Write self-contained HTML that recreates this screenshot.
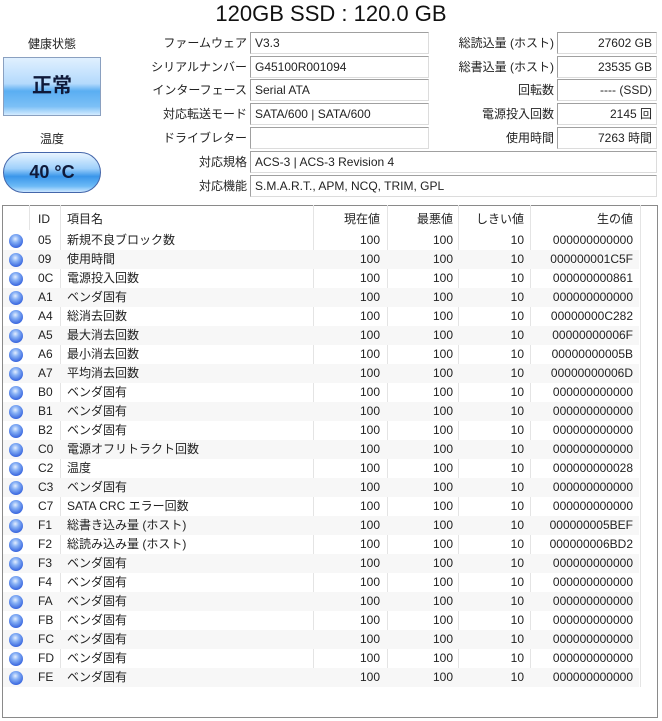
<!DOCTYPE html><html><head><meta charset="utf-8"><style>
*{margin:0;padding:0;box-sizing:border-box}
body{width:662px;height:721px;background:#fff;font-family:"Liberation Sans","Noto Sans CJK JP",sans-serif;color:#222;position:relative;overflow:hidden;font-size:12px}
.a{position:absolute;white-space:nowrap}
.title{left:0;width:662px;top:1px;text-align:center;font-size:22px;color:#111}
.lbl{text-align:right;font-size:12px;line-height:22px}
.box{height:22px;border:1px solid #dcdcdc;border-top-color:#a0a0a0;border-left-color:#a0a0a0;line-height:20px;padding:0 4px;font-size:12px}
.r{text-align:right}
.health{left:3px;top:57px;width:98px;height:59px;border:1px solid #8aa0c0;background:linear-gradient(#e0f0ff,#b4dafc 45%,#5aaef2 58%,#7cc0f6 85%,#d4ebff);text-align:center;line-height:57px;font-size:20px;font-weight:bold;color:#0f1a3a}
.temp{left:3px;top:152px;width:98px;height:41px;border:1px solid #4466aa;border-radius:21px;background:linear-gradient(#e8f4ff,#9fd0fb 40%,#3a96ea 60%,#6cbaf6 85%,#cbe6ff);text-align:center;line-height:39px;font-size:18px;font-weight:bold;color:#0f1a3a}
.tbl{left:2px;top:205px;width:656px;height:513px;border:1px solid #8a8a8a}
.row{position:absolute;left:3px;width:636px;height:19px;line-height:19px;font-size:12px}
.row span{position:absolute;top:0}
.dot{width:14px;height:14px;border-radius:50%;top:3px!important;left:6px;background:radial-gradient(circle at 45% 35%,#e4eeff 0,#86b0f5 30%,#3d6ae0 72%,#2a4fb8);}
.vl{position:absolute;top:205px;width:1px;background:#e4e4e4;height:482px}
</style></head><body>
<div class="a title">120GB SSD : 120.0 GB</div>
<div class="a" style="left:0;width:104px;text-align:center;top:35px">健康状態</div>
<div class="a health">正常</div>
<div class="a" style="left:0;width:104px;text-align:center;top:130px">温度</div>
<div class="a temp">40 °C</div>

<div class="a lbl" style="left:100px;width:147px;top:32px">ファームウェア</div>
<div class="a box" style="left:250px;width:179px;top:32px">V3.3</div>
<div class="a lbl" style="left:100px;width:147px;top:56px">シリアルナンバー</div>
<div class="a box" style="left:250px;width:179px;top:56px">G45100R001094</div>
<div class="a lbl" style="left:100px;width:147px;top:79px">インターフェース</div>
<div class="a box" style="left:250px;width:179px;top:79px">Serial ATA</div>
<div class="a lbl" style="left:100px;width:147px;top:103px">対応転送モード</div>
<div class="a box" style="left:250px;width:179px;top:103px">SATA/600 | SATA/600</div>
<div class="a lbl" style="left:100px;width:147px;top:127px">ドライブレター</div>
<div class="a box" style="left:250px;width:179px;top:127px"></div>
<div class="a lbl" style="left:100px;width:147px;top:151px">対応規格</div>
<div class="a box" style="left:250px;width:407px;top:151px">ACS-3 | ACS-3 Revision 4</div>
<div class="a lbl" style="left:100px;width:147px;top:175px">対応機能</div>
<div class="a box" style="left:250px;width:407px;top:175px">S.M.A.R.T., APM, NCQ, TRIM, GPL</div>

<div class="a lbl" style="left:430px;width:124px;top:32px">総読込量 (ホスト)</div>
<div class="a box r" style="left:557px;width:100px;top:32px">27602 GB</div>
<div class="a lbl" style="left:430px;width:124px;top:56px">総書込量 (ホスト)</div>
<div class="a box r" style="left:557px;width:100px;top:56px">23535 GB</div>
<div class="a lbl" style="left:430px;width:124px;top:79px">回転数</div>
<div class="a box r" style="left:557px;width:100px;top:79px">---- (SSD)</div>
<div class="a lbl" style="left:430px;width:124px;top:103px">電源投入回数</div>
<div class="a box r" style="left:557px;width:100px;top:103px">2145 回</div>
<div class="a lbl" style="left:430px;width:124px;top:127px">使用時間</div>
<div class="a box r" style="left:557px;width:100px;top:127px">7263 時間</div>

<div class="a tbl"></div>
<div class="vl" style="left:29px;height:25px"></div>
<div class="vl" style="left:60px"></div>
<div class="vl" style="left:313px"></div>
<div class="vl" style="left:387px"></div>
<div class="vl" style="left:458px"></div>
<div class="vl" style="left:530px"></div>
<div class="vl" style="left:640px"></div>
<div class="row" style="top:208px;height:22px;line-height:22px"><span style="left:35px">ID</span><span style="left:64px">項目名</span><span style="right:259px">現在値</span><span style="right:186px">最悪値</span><span style="right:115px">しきい値</span><span style="right:6px">生の値</span></div>
<div class="row" style="top:231px"><span class="dot"></span><span style="left:35px">05</span><span style="left:64px">新規不良ブロック数</span><span style="right:259px">100</span><span style="right:186px">100</span><span style="right:115px">10</span><span style="right:6px">000000000000</span></div>
<div class="row" style="top:250px;background:#f7f7f7"><span class="dot"></span><span style="left:35px">09</span><span style="left:64px">使用時間</span><span style="right:259px">100</span><span style="right:186px">100</span><span style="right:115px">10</span><span style="right:6px">000000001C5F</span></div>
<div class="row" style="top:269px"><span class="dot"></span><span style="left:35px">0C</span><span style="left:64px">電源投入回数</span><span style="right:259px">100</span><span style="right:186px">100</span><span style="right:115px">10</span><span style="right:6px">000000000861</span></div>
<div class="row" style="top:288px;background:#f7f7f7"><span class="dot"></span><span style="left:35px">A1</span><span style="left:64px">ベンダ固有</span><span style="right:259px">100</span><span style="right:186px">100</span><span style="right:115px">10</span><span style="right:6px">000000000000</span></div>
<div class="row" style="top:307px"><span class="dot"></span><span style="left:35px">A4</span><span style="left:64px">総消去回数</span><span style="right:259px">100</span><span style="right:186px">100</span><span style="right:115px">10</span><span style="right:6px">00000000C282</span></div>
<div class="row" style="top:326px;background:#f7f7f7"><span class="dot"></span><span style="left:35px">A5</span><span style="left:64px">最大消去回数</span><span style="right:259px">100</span><span style="right:186px">100</span><span style="right:115px">10</span><span style="right:6px">00000000006F</span></div>
<div class="row" style="top:345px"><span class="dot"></span><span style="left:35px">A6</span><span style="left:64px">最小消去回数</span><span style="right:259px">100</span><span style="right:186px">100</span><span style="right:115px">10</span><span style="right:6px">00000000005B</span></div>
<div class="row" style="top:364px;background:#f7f7f7"><span class="dot"></span><span style="left:35px">A7</span><span style="left:64px">平均消去回数</span><span style="right:259px">100</span><span style="right:186px">100</span><span style="right:115px">10</span><span style="right:6px">00000000006D</span></div>
<div class="row" style="top:383px"><span class="dot"></span><span style="left:35px">B0</span><span style="left:64px">ベンダ固有</span><span style="right:259px">100</span><span style="right:186px">100</span><span style="right:115px">10</span><span style="right:6px">000000000000</span></div>
<div class="row" style="top:402px;background:#f7f7f7"><span class="dot"></span><span style="left:35px">B1</span><span style="left:64px">ベンダ固有</span><span style="right:259px">100</span><span style="right:186px">100</span><span style="right:115px">10</span><span style="right:6px">000000000000</span></div>
<div class="row" style="top:421px"><span class="dot"></span><span style="left:35px">B2</span><span style="left:64px">ベンダ固有</span><span style="right:259px">100</span><span style="right:186px">100</span><span style="right:115px">10</span><span style="right:6px">000000000000</span></div>
<div class="row" style="top:440px;background:#f7f7f7"><span class="dot"></span><span style="left:35px">C0</span><span style="left:64px">電源オフリトラクト回数</span><span style="right:259px">100</span><span style="right:186px">100</span><span style="right:115px">10</span><span style="right:6px">000000000000</span></div>
<div class="row" style="top:459px"><span class="dot"></span><span style="left:35px">C2</span><span style="left:64px">温度</span><span style="right:259px">100</span><span style="right:186px">100</span><span style="right:115px">10</span><span style="right:6px">000000000028</span></div>
<div class="row" style="top:478px;background:#f7f7f7"><span class="dot"></span><span style="left:35px">C3</span><span style="left:64px">ベンダ固有</span><span style="right:259px">100</span><span style="right:186px">100</span><span style="right:115px">10</span><span style="right:6px">000000000000</span></div>
<div class="row" style="top:497px"><span class="dot"></span><span style="left:35px">C7</span><span style="left:64px">SATA CRC エラー回数</span><span style="right:259px">100</span><span style="right:186px">100</span><span style="right:115px">10</span><span style="right:6px">000000000000</span></div>
<div class="row" style="top:516px;background:#f7f7f7"><span class="dot"></span><span style="left:35px">F1</span><span style="left:64px">総書き込み量 (ホスト)</span><span style="right:259px">100</span><span style="right:186px">100</span><span style="right:115px">10</span><span style="right:6px">000000005BEF</span></div>
<div class="row" style="top:535px"><span class="dot"></span><span style="left:35px">F2</span><span style="left:64px">総読み込み量 (ホスト)</span><span style="right:259px">100</span><span style="right:186px">100</span><span style="right:115px">10</span><span style="right:6px">000000006BD2</span></div>
<div class="row" style="top:554px;background:#f7f7f7"><span class="dot"></span><span style="left:35px">F3</span><span style="left:64px">ベンダ固有</span><span style="right:259px">100</span><span style="right:186px">100</span><span style="right:115px">10</span><span style="right:6px">000000000000</span></div>
<div class="row" style="top:573px"><span class="dot"></span><span style="left:35px">F4</span><span style="left:64px">ベンダ固有</span><span style="right:259px">100</span><span style="right:186px">100</span><span style="right:115px">10</span><span style="right:6px">000000000000</span></div>
<div class="row" style="top:592px;background:#f7f7f7"><span class="dot"></span><span style="left:35px">FA</span><span style="left:64px">ベンダ固有</span><span style="right:259px">100</span><span style="right:186px">100</span><span style="right:115px">10</span><span style="right:6px">000000000000</span></div>
<div class="row" style="top:611px"><span class="dot"></span><span style="left:35px">FB</span><span style="left:64px">ベンダ固有</span><span style="right:259px">100</span><span style="right:186px">100</span><span style="right:115px">10</span><span style="right:6px">000000000000</span></div>
<div class="row" style="top:630px;background:#f7f7f7"><span class="dot"></span><span style="left:35px">FC</span><span style="left:64px">ベンダ固有</span><span style="right:259px">100</span><span style="right:186px">100</span><span style="right:115px">10</span><span style="right:6px">000000000000</span></div>
<div class="row" style="top:649px"><span class="dot"></span><span style="left:35px">FD</span><span style="left:64px">ベンダ固有</span><span style="right:259px">100</span><span style="right:186px">100</span><span style="right:115px">10</span><span style="right:6px">000000000000</span></div>
<div class="row" style="top:668px;background:#f7f7f7"><span class="dot"></span><span style="left:35px">FE</span><span style="left:64px">ベンダ固有</span><span style="right:259px">100</span><span style="right:186px">100</span><span style="right:115px">10</span><span style="right:6px">000000000000</span></div>
</body></html>
